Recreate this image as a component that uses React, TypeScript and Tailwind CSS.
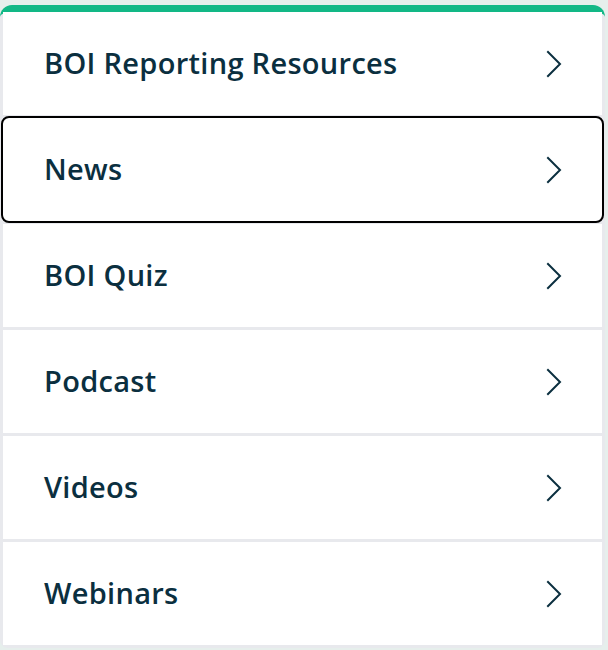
import React from 'react';

const items = ['BOI Reporting Resources', 'News', 'BOI Quiz', 'Podcast', 'Videos', 'Webinars'];

const Chevron: React.FC = () => (
  <svg width="16" height="28" viewBox="0 0 16 28" fill="none" className="shrink-0">
    <path d="M2 2 L14 14 L2 26" stroke="#0b2f3f" strokeWidth="2" strokeLinecap="square" strokeLinejoin="miter" />
  </svg>
);

const App: React.FC = () => {
  return (
    <div className="w-[608px] h-[650px] bg-[#e6efec] pt-[5px] overflow-hidden font-['Open_Sans',sans-serif]">
      <div className="w-[605px] rounded-t-[12px] rounded-b-[8px] border-t-[7px] border-[#12b886] bg-[#e8e9ed] px-[3px] pb-[3px]">
        <ul className="flex flex-col gap-[3px]">
          {items.map((label) => (
            <li
              key={label}
              className={
                label === 'News'
                  ? 'h-[103px] bg-white flex items-center justify-between pl-[41px] pr-[40px] rounded-[6px] outline-2 outline-black'
                  : 'h-[103px] bg-white flex items-center justify-between pl-[41px] pr-[40px]'
              }
            >
              <span className="text-[29px] leading-none font-semibold tracking-[0.3px] text-[#0b2f3f] -mt-[3px]">{label}</span>
              <Chevron />
            </li>
          ))}
        </ul>
      </div>
    </div>
  );
};

export default App;
